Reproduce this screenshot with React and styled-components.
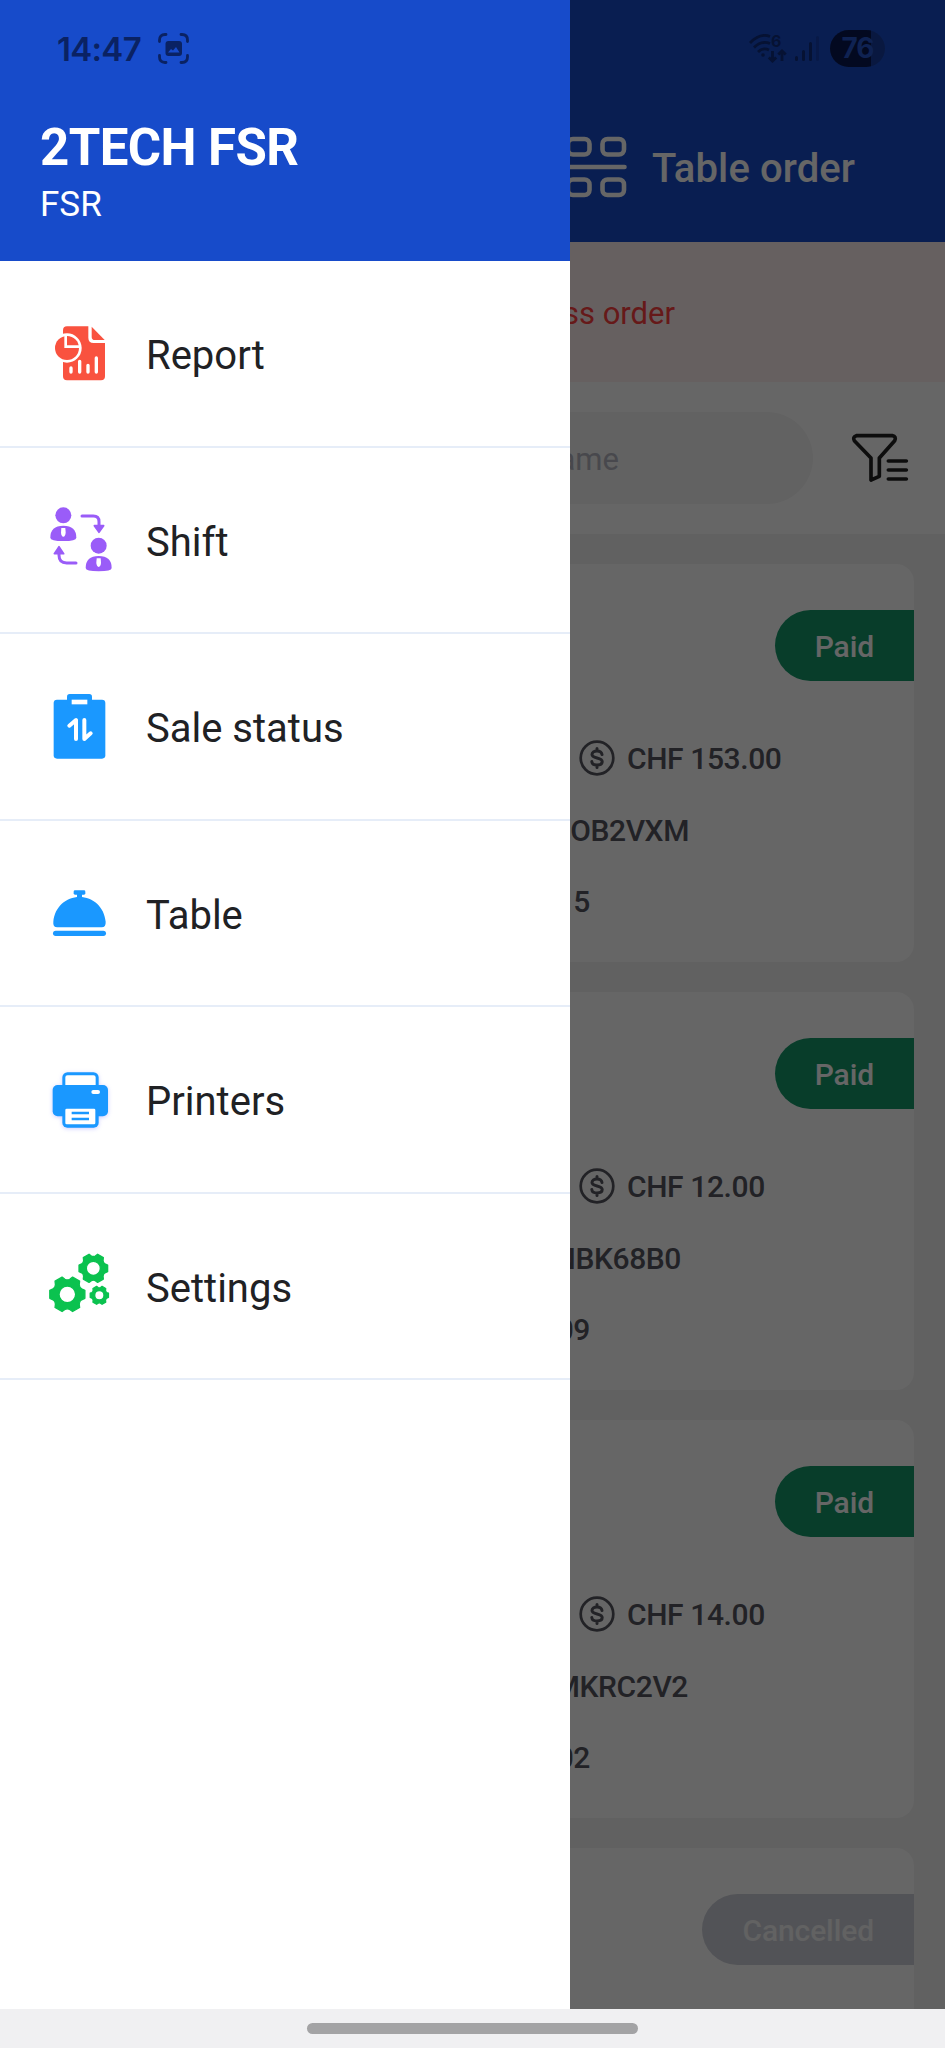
import React from 'react'
import styled, { createGlobalStyle } from 'styled-components'

const menu = [
  { label: 'Report', icon: <ReportIcon /> },
  { label: 'Shift', icon: <ShiftIcon /> },
  { label: 'Sale status', icon: <SaleIcon /> },
  { label: 'Table', icon: <BellIcon /> },
  { label: 'Printers', icon: <PrinterIcon /> },
  { label: 'Settings', icon: <GearsIcon /> },
]

const orders = [
  { status: 'Paid', total: 'CHF 153.00', code: 'OB2VXM', codeEnd: 658, no: '5' },
  { status: 'Paid', total: 'CHF 12.00', code: 'NBK68B0', codeEnd: 650, no: '09' },
  { status: 'Paid', total: 'CHF 14.00', code: 'MKRC2V2', codeEnd: 657, no: '02' },
  { status: 'Cancelled' },
]

function ReportIcon() {
  return (
    <svg viewBox='0 0 192 192' fill='#f9523f'>
      <path d='M45 25Q45 13 57 13H121V47Q121 63 137 63H171V163Q171 175 159 175H57Q45 175 45 163Z' />
      <path d='M131 14L170 54H141Q131 54 131 44Z' />
      <circle cx='57' cy='78' r='44' fill='#fff' />
      <circle cx='57' cy='78' r='36' />
      <path d='M53 38V74H96' fill='none' stroke='#fff' strokeWidth='8' />
      <path
        d='M69 138V150M95 118V150M120 130V150M145 108V150'
        fill='none'
        stroke='#fff'
        strokeWidth='10'
        strokeLinecap='round'
      />
    </svg>
  )
}

function Person({ x, y }) {
  return (
    <g transform={`translate(${x} ${y})`}>
      <circle cx='39' cy='24' r='24' />
      <path d='M0 91Q0 55 39 55T78 91Q78 101 39 101T0 91Z' />
      <path d='M33 62H45L46 76Q45 87 39 88Q33 87 32 76Z' fill='#fff' />
    </g>
  )
}

function ShiftIcon() {
  return (
    <svg viewBox='0 0 192 192' fill='#9a5cf8'>
      <Person x={7} y={-2} />
      <Person x={113} y={89} />
      <g stroke='#9a5cf8' strokeLinecap='round' strokeLinejoin='round'>
        <path d='M102 24H136Q153 24 153 41V56' fill='none' strokeWidth='9' />
        <path d='M139 53H167L153 73Z' strokeWidth='5' />
        <path d='M84 165H56Q33 165 33 142V132' fill='none' strokeWidth='9' />
        <path d='M19 137H47L33 116Z' strokeWidth='5' />
      </g>
    </svg>
  )
}

function SaleIcon() {
  return (
    <svg viewBox='0 0 192 192' fill='#1a98ff'>
      <rect x='17' y='14' width='155' height='177' rx='10' />
      <rect x='57' y='-3' width='75' height='40' rx='8' />
      <rect x='71' y='14' width='47' height='14' fill='#fff' />
      <path
        d='M64 92L84 75V132M109 75V132L128 115'
        fill='none'
        stroke='#fff'
        strokeWidth='12'
        strokeLinecap='round'
        strokeLinejoin='round'
      />
    </svg>
  )
}

function BellIcon() {
  return (
    <svg viewBox='0 0 192 192' fill='#1a98ff'>
      <rect x='77' y='28' width='35' height='13' rx='4' />
      <rect x='87' y='38' width='15' height='14' />
      <path d='M28 139Q14 139 16 122C20 78 54 48 94.5 48S169 78 173 122Q174 139 161 139Z' />
      <rect x='15' y='149' width='159' height='16' rx='8' />
    </svg>
  )
}

function PrinterIcon() {
  return (
    <PrinterSvg viewBox='0 0 192 192' fill='#1a98ff'>
      <rect x='47.500' y='17' width='100' height='60' rx='11' fill='#fff' stroke='#1a98ff' strokeWidth='9' />
      <rect x='14' y='51' width='166' height='94' rx='15' />
      <rect x='130' y='66' width='26' height='12' rx='6' fill='#fff' />
      <rect x='43' y='110' width='109' height='69' rx='15' />
      <rect x='52' y='122' width='90' height='47' rx='4' fill='#fff' />
      <path d='M71 135H123M71 153H123' stroke='#1a98ff' strokeWidth='7' />
    </PrinterSvg>
  )
}

const gearPath = (cx, cy, r, hole) => {
  const at = (deg, rad) => {
    const a = (deg * Math.PI) / 180
    return `${(cx + rad * Math.cos(a)).toFixed(1)} ${(cy + rad * Math.sin(a)).toFixed(1)}`
  }
  let d = ''
  for (let t = 0; t < 360; t += 60) {
    d += `${t ? 'L' : 'M'}${at(t - 21, r * 0.85)}L${at(t - 13, r)}L${at(t + 13, r)}L${at(t + 21, r * 0.85)}`
    d += `Q${at(t + 30, r * 0.77)} ${at(t + 39, r * 0.85)}`
  }
  return `${d}ZM${cx - hole} ${cy}a${hole} ${hole} 0 1 0 ${hole * 2} 0a${hole} ${hole} 0 1 0 ${-hole * 2} 0Z`
}

function GearsIcon() {
  return (
    <svg viewBox='0 0 192 192' fill='#0bc24f' stroke='#0bc24f' strokeWidth='4' strokeLinejoin='round' fillRule='evenodd'>
      <path d={gearPath(58, 121, 54, 25)} />
      <path d={gearPath(136, 43, 44, 21)} />
      <path d={gearPath(154, 124, 28, 14)} />
    </svg>
  )
}

function TablesIcon() {
  return (
    <svg width='62' height='62' viewBox='0 0 62 62' fill='none' stroke='#fff' strokeWidth='4.600' strokeLinecap='round'>
      <rect x='3' y='3' width='21.500' height='15.500' rx='5' />
      <rect x='37.500' y='3' width='21.500' height='15.500' rx='5' />
      <path d='M3 31H59.500' />
      <rect x='3' y='43.500' width='21.500' height='15.500' rx='5' />
      <rect x='37.500' y='43.500' width='21.500' height='15.500' rx='5' />
    </svg>
  )
}

function FilterIcon() {
  return (
    <svg width='58' height='50' viewBox='0 0 174 150' fill='none' stroke='#222' strokeWidth='11' strokeLinejoin='round' strokeLinecap='round'>
      <path d='M16 8H124Q137 10 131 23L85 75V130L60 141V75L10 23Q4 12 16 8Z' />
      <path d='M112 84H166M112 111H166M112 138H166' />
    </svg>
  )
}

function DollarIcon() {
  return (
    <svg width='36' height='36' viewBox='0 0 36 36' fill='none' stroke='#55565f' strokeWidth='2.700' strokeLinecap='round'>
      <circle cx='18' cy='18' r='16.300' />
      <path
        d='M23 14.500C22.500 11.500 20.500 11 18 11C15 11 13 12.500 13 14.500C13 19 23.200 17 23.200 21.600C23.200 24 21 25 18 25C15 25 13 24 12.800 21.500M18 8.500V11M18 25V27.500'
        strokeWidth='3'
      />
    </svg>
  )
}

function CaptureIcon() {
  return (
    <svg width='31' height='31' viewBox='0 0 31 31' fill='none' stroke='#0a2263' strokeWidth='2.800' strokeLinecap='round'>
      <path d='M1.500 8.500V7Q1.500 1.500 7 1.500H8M23 1.500H24Q29.500 1.500 29.500 7V8.500M29.500 22.500V24Q29.500 29.500 24 29.500H23M8 29.500H7Q1.500 29.500 1.500 24V22.500' />
      <rect x='7.500' y='8' width='16.500' height='15' rx='3' fill='#0a2263' stroke='none' />
      <path d='M10 19.500L13 16L15 17.500L18 14L21.500 19.500Z' fill='#174bca' stroke='none' />
    </svg>
  )
}

function WifiIcon() {
  return (
    <WifiBox>
      <svg width='39' height='30' viewBox='0 0 39 30' fill='none' stroke='#061233' strokeWidth='2.800'>
        <path d='M1 9Q11 -1.500 21 2.500M5 13.500Q13 6 21 9.500M9 18Q14 13 20 16' />
        <circle cx='14' cy='21' r='1.800' fill='#061233' stroke='none' />
        <path d='M23.500 17V27M19.800 23.500L23.500 27L27.200 23.500M33 27V17M29.300 20.500L33 17L36.700 20.500' />
      </svg>
      <span>6</span>
    </WifiBox>
  )
}

function SignalIcon() {
  return (
    <svg width='25' height='26' viewBox='0 0 25 26' fill='#061233'>
      <rect x='0' y='20' width='3' height='5' rx='1.500' />
      <rect x='7' y='14' width='3' height='11' rx='1.500' />
      <rect x='14' y='6' width='3' height='19' rx='1.500' />
      <rect x='21' y='0' width='3' height='25' rx='1.500' opacity='0.3' />
    </svg>
  )
}

function App() {
  return (
    <Screen>
      <GlobalStyle />
      <Page>
        <Header>
          <TablesIcon />
          <h1>Table order</h1>
        </Header>
        <Alert>
          <p>ss order</p>
        </Alert>
        <SearchBar>
          <SearchInput>
            <p>ame</p>
          </SearchInput>
          <FilterIcon />
        </SearchBar>
        <List>
          {orders.map((order, i) => (
            <Card key={i}>
              <Badge $cancelled={order.status === 'Cancelled'}>{order.status}</Badge>
              {order.total && (
                <Details>
                  <Total>
                    <DollarIcon />
                    <span>{order.total}</span>
                  </Total>
                  <Line $end={order.codeEnd}>{order.code}</Line>
                  <Line $end={559}>{order.no}</Line>
                </Details>
              )}
            </Card>
          ))}
        </List>
      </Page>
      <Overlay />
      <Drawer>
        <DrawerHeader>
          <h2>2TECH FSR</h2>
          <p>FSR</p>
        </DrawerHeader>
        {menu.map((item) => (
          <MenuItem key={item.label}>
            <MenuIcon>{item.icon}</MenuIcon>
            <span>{item.label}</span>
          </MenuItem>
        ))}
      </Drawer>
      <StatusBar>
        <Clock>14:47</Clock>
        <CaptureIcon />
        <StatusRight>
          <WifiIcon />
          <SignalIcon />
          <Battery>76</Battery>
        </StatusRight>
      </StatusBar>
      <NavBar>
        <div />
      </NavBar>
    </Screen>
  )
}

const GlobalStyle = createGlobalStyle`
  * {
    box-sizing: border-box;
    margin: 0;
    padding: 0;
  }
  body {
    font-family: Roboto, sans-serif;
    background-color: #fff;
  }
`
const Screen = styled.div`
  position: relative;
  width: 945px;
  height: 2048px;
  overflow: hidden;
  display: flex;
  flex-direction: column;
`
const Page = styled.div`
  height: 2008.500px;
  flex-shrink: 0;
  overflow: hidden;
  display: flex;
  flex-direction: column;
  background-color: #f3f3f3;
`
const Header = styled.div`
  height: 241.500px;
  flex-shrink: 0;
  display: flex;
  align-items: flex-end;
  gap: 25px;
  padding: 0 0 44px 565px;
  background-color: #174bca;
  color: #fff;
  h1 {
    font-size: 40px;
    font-weight: 500;
    line-height: 58px;
    letter-spacing: 0.1px;
  }
`
const Alert = styled.div`
  height: 140.500px;
  flex-shrink: 0;
  display: flex;
  align-items: center;
  background-color: #fff0f0;
  p {
    width: 675px;
    padding-top: 3px;
    text-align: right;
    font-size: 31px;
    color: #ff4040;
  }
`
const SearchBar = styled.div`
  height: 152px;
  flex-shrink: 0;
  display: flex;
  align-items: center;
  gap: 38px;
  padding-left: 31px;
  background-color: #fff;
`
const SearchInput = styled.div`
  width: 782px;
  height: 92px;
  display: flex;
  align-items: center;
  border-radius: 46px;
  background-color: #f5f5f5;
  p {
    width: 588px;
    padding-top: 3px;
    text-align: right;
    font-size: 31px;
    color: #b4b5c0;
  }
`
const List = styled.div`
  display: flex;
  flex-direction: column;
  gap: 30px;
  padding: 30px 31px 0;
`
const Card = styled.div`
  height: 398px;
  flex-shrink: 0;
  display: flex;
  flex-direction: column;
  gap: 41px;
  padding-top: 46px;
  border-radius: 18px;
  background-color: #fff;
`
const Badge = styled.div`
  align-self: flex-end;
  height: 71px;
  line-height: 73px;
  padding: 0 40px;
  border-radius: 36px 0 0 36px;
  font-size: 30px;
  font-weight: 500;
  letter-spacing: -0.1px;
  color: ${({ $cancelled }) => ($cancelled ? '#f4f4f6' : '#fff')};
  background-color: ${({ $cancelled }) => ($cancelled ? '#cdd0d9' : '#149869')};
`
const Details = styled.div`
  display: flex;
  flex-direction: column;
  font-size: 30px;
  font-weight: 500;
  line-height: 71.700px;
  letter-spacing: -0.4px;
  color: #55565f;
`
const Total = styled.div`
  display: flex;
  align-items: center;
  gap: 12px;
  height: 71.700px;
  padding-left: 548px;
  span {
    padding-top: 2px;
  }
`
const Line = styled.div`
  width: ${({ $end }) => $end}px;
  height: 71.700px;
  padding-top: 1px;
  text-align: right;
`
const Overlay = styled.div`
  position: absolute;
  inset: 0;
  background-color: rgba(0, 0, 0, 0.6);
`
const Drawer = styled.div`
  position: absolute;
  top: 0;
  left: 0;
  width: 569.600px;
  height: 2008.500px;
  background-color: #fff;
`
const DrawerHeader = styled.div`
  height: 261.300px;
  padding: 118px 40px 0;
  background-color: #174bca;
  color: #fff;
  h2 {
    font-size: 51px;
    font-weight: 700;
    line-height: 60px;
    letter-spacing: -0.600px;
  }
  p {
    margin-top: 5px;
    font-size: 35px;
    line-height: 44px;
  }
`
const MenuItem = styled.div`
  height: 186.500px;
  display: flex;
  align-items: center;
  gap: 34px;
  padding-left: 48px;
  border-bottom: 2px solid #e6edf8;
  font-size: 40px;
  color: #202124;
  span {
    padding-top: 4px;
  }
`
const MenuIcon = styled.div`
  width: 64px;
  height: 64px;
  svg {
    display: block;
    width: 64px;
    height: 64px;
    overflow: visible;
  }
`
const PrinterSvg = styled.svg`
  filter: drop-shadow(0 1px 2px rgba(90, 90, 255, 0.3));
`
const StatusBar = styled.div`
  position: absolute;
  top: 0;
  left: 0;
  width: 945px;
  height: 97px;
  display: flex;
  align-items: center;
  gap: 17px;
  padding: 0 60px 0 57px;
`
const Clock = styled.p`
  font-family: Inter, sans-serif;
  font-size: 33px;
  font-weight: 600;
  letter-spacing: -0.700px;
  color: #0a2263;
`
const StatusRight = styled.div`
  flex: 1;
  display: flex;
  justify-content: flex-end;
  align-items: center;
  gap: 7px;
`
const WifiBox = styled.div`
  position: relative;
  height: 30px;
  span {
    position: absolute;
    top: -3px;
    left: 22px;
    font-family: Inter, sans-serif;
    font-size: 16px;
    font-weight: 700;
    line-height: 20px;
    color: #061233;
  }
`
const Battery = styled.div`
  width: 55px;
  height: 37px;
  margin-left: 3px;
  border-radius: 19px;
  text-align: center;
  font-family: Inter, sans-serif;
  font-size: 28px;
  font-weight: 700;
  letter-spacing: -1px;
  line-height: 37px;
  color: #0f2252;
  background: linear-gradient(90deg, #030920 41px, #091840 41px);
`
const NavBar = styled.div`
  position: relative;
  height: 39.500px;
  flex-shrink: 0;
  display: flex;
  justify-content: center;
  padding-top: 14.500px;
  background-color: #f0f0f2;
  div {
    width: 331px;
    height: 11px;
    border-radius: 6px;
    background-color: #a3a3a5;
  }
`

export default App
